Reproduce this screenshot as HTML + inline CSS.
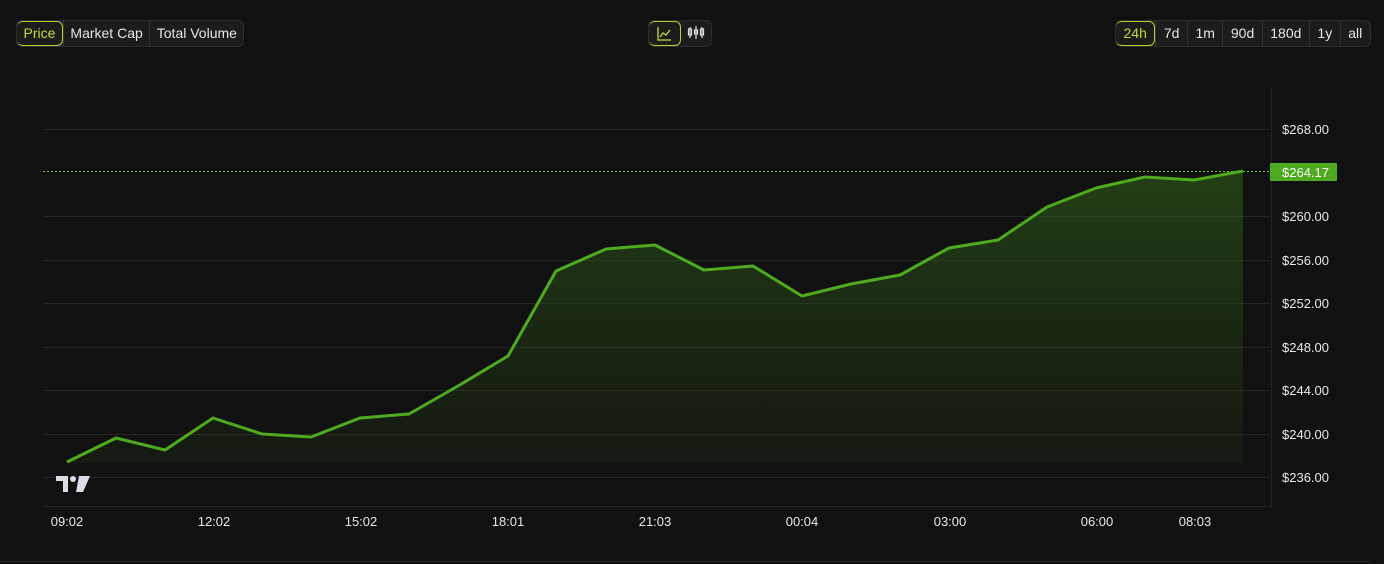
<!DOCTYPE html>
<html><head><meta charset="utf-8"><style>
html,body{margin:0;padding:0;background:#111111;width:1384px;height:564px;overflow:hidden;font-family:"Liberation Sans",sans-serif;}
.grp{position:absolute;top:20px;height:25px;display:flex;border:1px solid #2e2e2e;border-radius:6px;background:#1c1c1c;overflow:hidden}
.grp div{padding:0 7px;line-height:25px;font-size:14px;color:#e6e6e6;border-left:1px solid #333}
.grp div:first-child{border-left:none}
.grp .on{border:1px solid #b5d12a;border-radius:6px;color:#c5dd3a;line-height:23px}
.r div{padding:0 7.5px}
.l div{padding:0 6.5px}
</style></head><body>
<div class="grp l" style="left:16px"><div class="on">Price</div><div>Market Cap</div><div>Total Volume</div></div>
<div class="grp" style="left:648px;width:62px">
<div class="on" style="width:17px;padding:0 7px"><svg width="17" height="23" viewBox="0 0 17 23"><path d="M2 5V18H15" stroke="#c5dd3a" fill="none" stroke-width="1.3"/><path d="M4 15L7 11L10 13L14 8" stroke="#c5dd3a" fill="none" stroke-width="1.3"/></svg></div>
<div style="border:none;padding:0 6px"><svg width="18" height="23" viewBox="0 0 18 23"><g stroke="#ddd" fill="none" stroke-width="1.2"><path d="M3 6V17M9 5V18M15 6V17"/><rect x="1.5" y="8" width="3" height="6"/><rect x="7.5" y="9" width="3" height="4"/><rect x="13.5" y="8" width="3" height="6"/></g></svg></div>
</div>
<div class="grp r" style="left:1115px"><div class="on">24h</div><div>7d</div><div>1m</div><div>90d</div><div>180d</div><div>1y</div><div>all</div></div>
<svg width="1384" height="564" style="position:absolute;left:0;top:0">
<defs><linearGradient id="g" x1="0" y1="0" x2="0" y2="1"><stop offset="0" stop-color="#3a7a1a" stop-opacity=".45"/><stop offset="1" stop-color="#2a4a14" stop-opacity=".15"/></linearGradient></defs>
<g stroke="#262626" stroke-width="1">
<line x1="43" y1="129.5" x2="1270" y2="129.5"/><line x1="43" y1="216.5" x2="1270" y2="216.5"/><line x1="43" y1="260.5" x2="1270" y2="260.5"/><line x1="43" y1="303.5" x2="1270" y2="303.5"/><line x1="43" y1="347.5" x2="1270" y2="347.5"/><line x1="43" y1="390.5" x2="1270" y2="390.5"/><line x1="43" y1="434.5" x2="1270" y2="434.5"/><line x1="43" y1="477.5" x2="1270" y2="477.5"/>
<line x1="1271.5" y1="88" x2="1271.5" y2="507"/><line x1="43" y1="506.5" x2="1271" y2="506.5"/>
<line x1="0" y1="561.5" x2="1370" y2="561.5"/>
</g>
<line x1="43" y1="171.5" x2="1270" y2="171.5" stroke="#6cc23a" stroke-width="1" stroke-dasharray="2 2"/>
<polygon fill="url(#g)" points="67,462 116,438 165,450 213,418 262,434 311,437 360,418 409,414 458,386 508,356 556,271 606,249 655,245 704,270 753,266 802,296 851,284 900,275 949,248 998,240 1047,207 1096,188 1145,177 1194,180 1243,171 1243,463 67,463"/>
<polyline fill="none" stroke="#4eaa1e" stroke-width="3" stroke-linejoin="round" points="67,462 116,438 165,450 213,418 262,434 311,437 360,418 409,414 458,386 508,356 556,271 606,249 655,245 704,270 753,266 802,296 851,284 900,275 949,248 998,240 1047,207 1096,188 1145,177 1194,180 1243,171"/>
<rect x="1270" y="163" width="67" height="18" fill="#4eaa1e" rx="1"/>
<g font-family="Liberation Sans,sans-serif" font-size="13" fill="#e8e8e8">
<text x="1282" y="134">$268.00</text><text x="1282" y="177" fill="#fff">$264.17</text><text x="1282" y="221">$260.00</text><text x="1282" y="265">$256.00</text><text x="1282" y="308">$252.00</text><text x="1282" y="352">$248.00</text><text x="1282" y="395">$244.00</text><text x="1282" y="439">$240.00</text><text x="1282" y="482">$236.00</text>
<g text-anchor="middle"><text x="67" y="526">09:02</text><text x="214" y="526">12:02</text><text x="361" y="526">15:02</text><text x="508" y="526">18:01</text><text x="655" y="526">21:03</text><text x="802" y="526">00:04</text><text x="950" y="526">03:00</text><text x="1097" y="526">06:00</text><text x="1195" y="526">08:03</text></g>
</g>
<g fill="#dcdce6"><path d="M56 476H68V492H63V481H56Z"/><circle cx="73" cy="479" r="3"/><path d="M79 476H90L83 492H76Z"/></g>
</svg>
</body></html>
